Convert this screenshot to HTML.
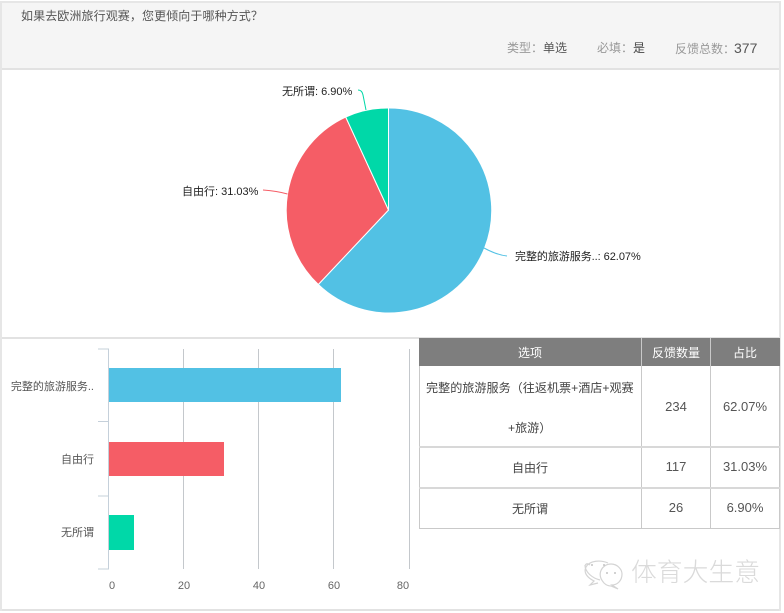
<!DOCTYPE html>
<html><head><meta charset="utf-8">
<style>
html,body{margin:0;padding:0;background:#fff;width:784px;height:613px;overflow:hidden}
body{position:relative;font-family:"Liberation Sans","Noto Sans CJK SC",sans-serif;color:#444}
.a{position:absolute;white-space:nowrap;line-height:16px}
.c{text-align:center}
.r{text-align:right}
.b{position:absolute;background:#ddd}
.t{background:#c9c9c9;position:absolute}
</style></head><body>
<div class="a" style="left:0;top:2px;width:780px;height:67px;background:#f5f5f5"></div>
<div class="b" style="left:0;top:1px;width:780px;height:2px;background:#e6e6e6"></div>
<div class="b" style="left:0;top:68px;width:780px;height:2px;background:#e2e2e2"></div>
<div class="b" style="left:0;top:337px;width:780px;height:2px;background:#e2e2e2"></div>
<div class="b" style="left:0;top:609px;width:780px;height:2px;background:#e2e2e2"></div>
<div class="b" style="left:0;top:1px;width:2px;height:610px;background:#e6e6e6"></div>
<div class="b" style="left:779px;top:1px;width:2px;height:610px;background:#e6e6e6"></div>

<div class="a" style="left:21px;top:8px;font-size:12px;color:#555;letter-spacing:.1px">如果去欧洲旅行观赛，您更倾向于哪种方式？</div>
<div class="a" style="left:507px;top:40px;font-size:12px;color:#999">类型：<span style="color:#555">单选</span></div>
<div class="a" style="left:597px;top:40px;font-size:12px;color:#999">必填：<span style="color:#444">是</span></div>
<div class="a" style="left:675px;top:40px;font-size:12px;color:#999">反馈总数：<span style="color:#555;font-size:14px;margin-left:-1px">377</span></div>

<svg class="a" style="left:0;top:0" width="784" height="613" viewBox="0 0 784 613">
<path d="M388.5 210 L388.5 108 A102.500 102.500 0 1 1 318.300 284.500 Z" fill="#52c1e4" stroke="#fff" stroke-width="1"/>
<path d="M388.5 210 L318.300 284.500 A102.500 102.500 0 0 1 345.700 117 Z" fill="#f55d66" stroke="#fff" stroke-width="1"/>
<path d="M388.5 210 L345.700 117 A102.500 102.500 0 0 1 388.5 108 Z" fill="#00d8a8" stroke="#fff" stroke-width="1"/>
<path d="M484 248 Q497 255 507 256" fill="none" stroke="#52c1e4" stroke-width="1"/>
<path d="M287.500 194 Q277 191 263 190" fill="none" stroke="#f55d66" stroke-width="1"/>
<path d="M366 110 Q364 100 363 95 Q362 90 358 90" fill="none" stroke="#00d8a8" stroke-width="1"/>
</svg>
<div class="a" style="left:282px;top:84px;font-size:11px;color:#222">无所谓: 6.90%</div>
<div class="a" style="left:182px;top:184px;font-size:11px;color:#222">自由行: 31.03%</div>
<div class="a" style="left:515px;top:249px;font-size:11px;color:#222;letter-spacing:-.05px">完整的旅游服务..: 62.07%</div>

<svg class="a" style="left:0;top:0" width="784" height="613" viewBox="0 0 784 613">
<g stroke="#c4c8cc" stroke-width="1" fill="none">
<path d="M183.500 349V569M258.500 349V569M333.500 349V569M409.500 349V569"/>
</g>
<g stroke="#c5d0da" stroke-width="1" fill="none">
<path d="M108.500 349V569M98 349H109M98 421.500H109M98 496H109M98 569H109"/>
</g>
<rect x="109" y="368" width="232" height="34" fill="#52c1e4"/>
<rect x="109" y="442" width="115" height="34" fill="#f55d66"/>
<rect x="109" y="515" width="25" height="35" fill="#00d8a8"/>
</svg>
<div class="a r" style="left:0;top:379px;width:94px;font-size:11px;color:#555">完整的旅游服务..</div>
<div class="a r" style="left:0;top:452px;width:94px;font-size:11px;color:#555">自由行</div>
<div class="a r" style="left:0;top:525px;width:94px;font-size:11px;color:#555">无所谓</div>
<div class="a c" style="left:92px;top:578px;width:40px;font-size:11px;color:#666">0</div>
<div class="a c" style="left:164px;top:578px;width:40px;font-size:11px;color:#666">20</div>
<div class="a c" style="left:239px;top:578px;width:40px;font-size:11px;color:#666">40</div>
<div class="a c" style="left:314px;top:578px;width:40px;font-size:11px;color:#666">60</div>
<div class="a c" style="left:383px;top:578px;width:40px;font-size:11px;color:#666">80</div>

<div class="a" style="left:419px;top:338px;width:361px;height:28px;background:#7e7e7e"></div>
<div class="t" style="left:419px;top:366px;width:1px;height:163px"></div>
<div class="t" style="left:641px;top:338px;width:1px;height:191px"></div>
<div class="t" style="left:710px;top:338px;width:1px;height:191px"></div>
<div class="t" style="left:779px;top:366px;width:1px;height:163px"></div>
<div class="t" style="left:419px;top:446px;width:361px;height:2px;background:#d8d8d8"></div>
<div class="t" style="left:419px;top:487px;width:361px;height:2px;background:#d8d8d8"></div>
<div class="t" style="left:419px;top:528px;width:361px;height:1px"></div>
<div class="a c" style="left:419px;top:345px;width:222px;font-size:12px;color:#fff">选项</div>
<div class="a c" style="left:642px;top:345px;width:68px;font-size:12px;color:#fff">反馈数量</div>
<div class="a c" style="left:711px;top:345px;width:68px;font-size:12px;color:#fff">占比</div>
<div class="a" style="left:426px;top:380px;font-size:12.100px;color:#444">完整的旅游服务（往返机票+酒店+观赛</div>
<div class="a" style="left:508px;top:420px;font-size:12.100px;color:#444">+旅游）</div>
<div class="a c" style="left:419px;top:460px;width:222px;font-size:12px;color:#444">自由行</div>
<div class="a c" style="left:419px;top:501px;width:222px;font-size:12px;color:#444">无所谓</div>
<div class="a c" style="left:642px;top:399px;width:68px;font-size:13px;color:#555">234</div>
<div class="a c" style="left:642px;top:459px;width:68px;font-size:13px;color:#555">117</div>
<div class="a c" style="left:642px;top:500px;width:68px;font-size:13px;color:#555">26</div>
<div class="a c" style="left:711px;top:399px;width:68px;font-size:13px;color:#555">62.07%</div>
<div class="a c" style="left:711px;top:459px;width:68px;font-size:13px;color:#555">31.03%</div>
<div class="a c" style="left:711px;top:500px;width:68px;font-size:13px;color:#555">6.90%</div>

<svg class="a" style="left:0;top:0" width="784" height="613" viewBox="0 0 784 613">
<g fill="none" stroke="#d4d4d4" stroke-width="1.200">
<path d="M600 580 C592 578 585 572 585 565 C585 568 585 561 590 565 M608 563 C601 560 590 560 586 567 C583 573 588 578 594 581 L590 585 L598 583"/>
<path d="M604 583 C596 574 602 564 611 564 C618 564 622 570 622 574 C622 581 617 585 612 585 L618 589 L611 586 C608 586 606 585 604 583 Z"/>
</g>
<g fill="#c4c4c4">
<circle cx="592" cy="565" r="1"/><circle cx="604" cy="565" r="1"/><circle cx="607" cy="573" r="1"/><circle cx="615" cy="573" r="1"/>
</g>
</svg>
<div class="a" style="left:631px;top:556px;font-size:25.800px;line-height:30px;color:#dadada;font-family:'Noto Sans CJK SC',sans-serif;font-weight:300">体育大生意</div>
</body></html>
